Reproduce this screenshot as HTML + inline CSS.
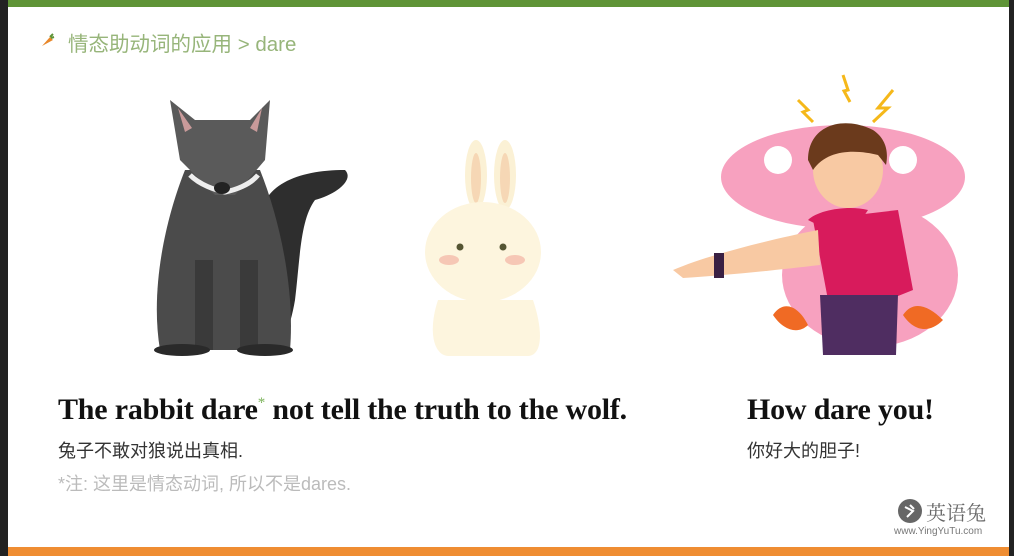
<!DOCTYPE html>
<html><head><meta charset="utf-8"><style>
*{margin:0;padding:0;box-sizing:border-box}
body{width:1014px;height:556px;background:#222;position:relative;overflow:hidden;font-family:"Liberation Sans","Noto Sans CJK SC",sans-serif}
#page{position:absolute;left:8px;top:0;width:1001px;height:556px;background:#fff}
.top{position:absolute;left:0;top:0;width:100%;height:7px;background:#5f9437}
.bot{position:absolute;left:0;top:547px;width:100%;height:9px;background:#ef8d32}
.crumb{position:absolute;left:60px;top:27px;font-size:20.5px;color:#97b57a}
.t1{position:absolute;left:50px;top:393px;font-family:"Liberation Serif",serif;font-weight:bold;font-size:30px;color:#111;letter-spacing:-0.2px}
.t1 sup{color:#7bb35a;font-size:15px;font-weight:normal;vertical-align:12px}
.cn{position:absolute;font-size:18px;color:#333}
.note{position:absolute;left:50px;top:470px;font-size:18px;color:#bbb}
.logo{position:absolute;left:890px;top:499px}
</style></head><body><div id="page">
<div class="top"></div>
<svg style="position:absolute;left:32px;top:32px" width="16" height="16"><path d="M2 14 L10 5 L13 8 Z" fill="#e8872a"/><path d="M10 5 L13 2 M11 6 L14 5" stroke="#5f9437" stroke-width="2"/></svg>
<div class="crumb">情态助动词的应用 &gt; dare</div>

<svg style="position:absolute;left:0;top:60px" width="1001" height="310">
<g transform="translate(-8,0)">
<path d="M262 180 C250 130 290 110 345 110 C355 120 335 135 315 140 C300 160 300 200 295 240 C290 270 280 290 275 290 Z" fill="#2e2e2e"/>
<path d="M185 110 C165 160 150 230 160 290 L290 290 C295 230 280 160 260 110 Z" fill="#4b4b4b"/>
<path d="M170 40 L195 60 L250 60 L270 40 L265 100 L235 135 L215 135 L180 100 Z" fill="#5a5a5a"/>
<path d="M178 48 L192 68 L185 72 Z M262 48 L250 68 L257 72 Z" fill="#c99a9a"/>
<path d="M190 115 C200 125 215 130 225 132 C235 130 250 125 258 115" stroke="#eee" stroke-width="5" fill="none"/>
<ellipse cx="222" cy="128" rx="8" ry="6" fill="#222"/>
<rect x="195" y="200" width="18" height="90" fill="#3a3a3a"/><rect x="240" y="200" width="18" height="90" fill="#3a3a3a"/>
<ellipse cx="182" cy="290" rx="28" ry="6" fill="#2a2a2a"/><ellipse cx="265" cy="290" rx="28" ry="6" fill="#2a2a2a"/>
</g>
<ellipse cx="468" cy="115" rx="11" ry="35" fill="#fbf1d5"/><ellipse cx="497" cy="115" rx="11" ry="35" fill="#fbf1d5"/>
<ellipse cx="468" cy="118" rx="5" ry="25" fill="#f6d7b5"/><ellipse cx="497" cy="118" rx="5" ry="25" fill="#f6d7b5"/>
<path d="M430 240 C420 270 425 295 440 296 L520 296 C535 295 535 270 525 240 Z" fill="#fdf5de"/>
<ellipse cx="475" cy="192" rx="58" ry="50" fill="#fdf5de"/>
<circle cx="452" cy="187" r="3.5" fill="#553"/><circle cx="495" cy="187" r="3.5" fill="#553"/>
<ellipse cx="441" cy="200" rx="10" ry="5" fill="#f6c7b5"/><ellipse cx="507" cy="200" rx="10" ry="5" fill="#f6c7b5"/>
<ellipse cx="835" cy="117" rx="122" ry="52" fill="#f7a1bf"/>
<ellipse cx="862" cy="215" rx="88" ry="72" fill="#f7a1bf"/>
<path d="M805 160 L890 150 L905 230 L880 240 L820 240 Z" fill="#d81b5c"/>
<path d="M812 235 L890 235 L888 295 L815 295 Z" fill="#4f2d61"/>
<path d="M665 210 C700 195 760 180 810 170 L812 205 C770 210 720 215 675 218 Z" fill="#f8c9a3"/>
<rect x="706" y="193" width="10" height="25" fill="#3a2043"/>
<path d="M800 160 C810 150 840 145 860 150 L840 180 Z" fill="#d81b5c"/>
<circle cx="770" cy="100" r="14" fill="#fff"/><circle cx="895" cy="100" r="14" fill="#fff"/>
<ellipse cx="840" cy="110" rx="35" ry="38" fill="#f8c9a3"/>
<path d="M800 100 C800 65 835 55 865 70 C880 80 880 95 878 105 L870 95 C850 90 820 88 805 110 Z" fill="#6b3a1c"/>
<path d="M790 40 L800 50 L795 52 L805 62 M835 15 L840 30 L836 31 L842 42 M885 30 L870 48 L880 48 L865 62" stroke="#f5b81a" stroke-width="3" fill="none"/>
<path d="M765 255 C775 240 790 245 800 265 C790 275 775 270 765 255 Z M895 255 C905 240 920 245 935 260 C920 275 905 270 895 255 Z" fill="#f06a24"/>
</svg>

<div class="t1">The rabbit dare<sup>*</sup> not tell the truth to the wolf.</div>
<div class="cn" style="left:50px;top:437px">兔子不敢对狼说出真相.</div>
<div class="note">*注: 这里是情态动词, 所以不是dares.</div>
<div class="t1" style="left:739px">How dare you!</div>
<div class="cn" style="left:739px;top:437px">你好大的胆子!</div>
<div class="logo">
<svg width="24" height="24" style="position:absolute;left:0;top:0"><circle cx="12" cy="12" r="12" fill="#666"/><path d="M7 8 L15 12 L9 18 M12 6 L16 10" stroke="#fff" stroke-width="2" fill="none"/></svg>
<div style="position:absolute;left:28px;top:-2px;font-family:'Noto Serif CJK SC',serif;font-size:20px;color:#666;white-space:nowrap">英语兔</div>
<div style="position:absolute;left:-4px;top:27px;font-size:10px;color:#777;white-space:nowrap">www.YingYuTu.com</div>
</div>
<div class="bot"></div>
</div></body></html>
